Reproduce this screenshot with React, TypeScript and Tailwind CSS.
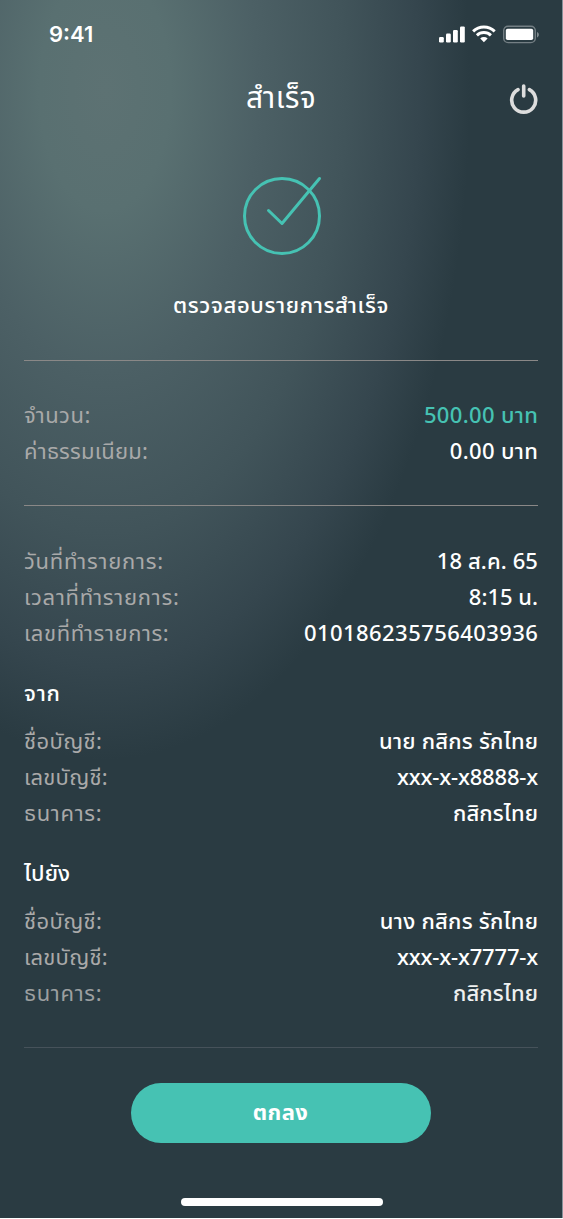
import clsx from "clsx";

type RowProps = {
    label: string;
    value: string;
    labelClass?: string;
    valueClass?: string;
};

function Row({ label, value, labelClass, valueClass }: RowProps) {
    return (
        <div className="flex h-9 items-center justify-between whitespace-nowrap">
            <span className={clsx(labelClass)}>{label}</span>
            <span className={clsx("font-medium", valueClass)}>{value}</span>
        </div>
    );
}

function StatusBar() {
    return (
        <div className="flex h-[68px] items-center justify-between pr-[22px] pl-[49px]">
            <span className="font-['Inter',sans-serif] text-[22px] font-semibold text-white">9:41</span>
            <svg width="101" height="20" viewBox="0 0 101 20" fill="white">
                <rect x="0" y="13" width="4.8" height="5.5" rx="1.2" />
                <rect x="7" y="9.6" width="4.8" height="8.9" rx="1.2" />
                <rect x="14" y="6" width="4.8" height="12.5" rx="1.2" />
                <rect x="21" y="2.4" width="4.8" height="16.1" rx="1.2" />
                <g fill="none" stroke="white" strokeWidth="2.9">
                    <path d="M34.1 7.4a15.3 15.3 0 0 1 21.6 0" />
                    <path d="M37.9 11.4a10 10 0 0 1 14 0" />
                </g>
                <path d="M41.2 14.4a5.4 5.4 0 0 1 7.4 0L44.9 18.2Z" />
                <rect x="64.7" y="2.2" width="31.6" height="16.4" rx="4.4" fill="none" stroke="white" strokeOpacity="0.35" strokeWidth="1.4" />
                <rect x="66.8" y="4.7" width="27.4" height="11.4" rx="1.8" />
                <path d="M98 8v5.4c1.2-.5 1.9-1.5 1.9-2.7S99.2 8.5 98 8Z" fillOpacity="0.4" />
            </svg>
        </div>
    );
}

export default function App() {
    return (
        <div className="h-[1219px] w-[563px] bg-white">
            <div className="flex h-[1218px] w-[563px] flex-col border-r border-[#87919a] bg-[#2a3b42] bg-[radial-gradient(365px_670px_at_105px_90px,#5d7273_0%,#597071_18%,#4c6065_42%,#41545a_66%,#35464e_86%,#2a3b42_100%)] font-['Noto_Sans','Noto_Sans_Thai',sans-serif] text-[22px] text-white">
                <StatusBar />
                <header className="grid h-[62px] grid-cols-3 items-center px-6">
                    <span />
                    <h1 className="pb-[5px] text-center text-[30px] tracking-[0.4px]">สำเร็จ</h1>
                    <svg className="justify-self-end" width="30" height="32" viewBox="0 0 30 32" fill="none" stroke="#dddddd" strokeWidth="3.6" strokeLinecap="round">
                        <path d="M10 6.6a12 12 0 1 0 11.4 0M15.7 3v10" />
                    </svg>
                </header>
                <section className="flex h-[230px] flex-col items-center pt-[45px]">
                    <svg className="ml-0.5" width="80" height="82" viewBox="0 0 80 82" fill="none" stroke="#46c2b3" strokeWidth="3" strokeLinecap="round" strokeLinejoin="round">
                        <circle cx="40" cy="41" r="37.5" />
                        <path d="M26.5 35.5 40 48.5 77.5 3.5" />
                    </svg>
                    <p className="mt-[31px] font-medium tracking-[0.65px] whitespace-nowrap">ตรวจสอบรายการสำเร็จ</p>
                </section>
                <main className="flex h-[706px] flex-col px-6">
                    <hr className="h-px shrink-0 border-0 bg-[#8a8887]" />
                    <div className="flex h-[144px] flex-col justify-center pb-0.5">
                        <Row label="จำนวน:" value="500.00 บาท" labelClass="text-[#a9a9a9] tracking-[0.5px]" valueClass="-mr-[0.3px] tracking-[0.35px] text-[#46c2b3]" />
                        <Row label="ค่าธรรมเนียม:" value="0.00 บาท" labelClass="text-[#a9a9a9] tracking-[0.22px]" valueClass="-mr-[0.3px] tracking-[0.35px]" />
                    </div>
                    <hr className="h-px shrink-0 border-0 bg-[#8a8887]" />
                    <div className="mt-[36px]">
                        <Row label="วันที่ทำรายการ:" value="18 ส.ค. 65" labelClass="text-[#a9a9a9] tracking-[0.75px]" valueClass="tracking-[0.1px]" />
                        <Row label="เวลาที่ทำรายการ:" value="8:15 น." labelClass="text-[#a9a9a9] tracking-[0.75px]" />
                        <Row label="เลขที่ทำรายการ:" value="010186235756403936" labelClass="text-[#a9a9a9] tracking-[0.6px]" valueClass="-mr-[0.4px] tracking-[0.44px]" />
                    </div>
                    <h2 className="mt-6 flex h-9 items-center font-medium tracking-[0.8px]">จาก</h2>
                    <div className="mt-3">
                        <Row label="ชื่อบัญชี:" value="นาย กสิกร รักไทย" labelClass="text-[#a9a9a9] tracking-[0.4px]" valueClass="-mr-[0.2px] tracking-[0.22px]" />
                        <Row label="เลขบัญชี:" value="xxx-x-x8888-x" labelClass="text-[#a9a9a9] tracking-[0.25px]" valueClass="-tracking-[0.17px]" />
                        <Row label="ธนาคาร:" value="กสิกรไทย" labelClass="text-[#a9a9a9] tracking-[0.7px]" valueClass="tracking-[0.1px]" />
                    </div>
                    <h2 className="mt-6 flex h-9 items-center font-medium tracking-[0.2px]">ไปยัง</h2>
                    <div className="mt-3">
                        <Row label="ชื่อบัญชี:" value="นาง กสิกร รักไทย" labelClass="text-[#a9a9a9] tracking-[0.4px]" valueClass="-mr-[0.2px] tracking-[0.25px]" />
                        <Row label="เลขบัญชี:" value="xxx-x-x7777-x" labelClass="text-[#a9a9a9] tracking-[0.25px]" valueClass="-tracking-[0.17px]" />
                        <Row label="ธนาคาร:" value="กสิกรไทย" labelClass="text-[#9c9fa0] tracking-[0.7px]" valueClass="tracking-[0.1px] text-[#eef0f0]" />
                    </div>
                    <hr className="mt-[37px] h-px shrink-0 border-0 bg-[#46525a]" />
                </main>
                <footer className="mt-[17px] flex flex-col items-center">
                    <button className="mr-px h-[60px] w-[300px] rounded-full bg-[#46c2b3] pb-[3px] font-bold tracking-[0.4px]">ตกลง</button>
                    <div className="mt-[55px] ml-0.5 h-2 w-[202px] rounded-full bg-white" />
                </footer>
            </div>
        </div>
    );
}
